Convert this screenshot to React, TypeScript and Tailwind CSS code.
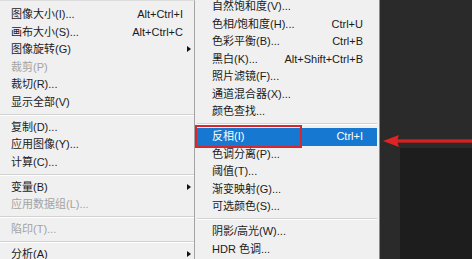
import React from "react";

type Item =
  | { sep: true }
  | { label: string; shortcut?: string; sub?: boolean; disabled?: boolean; active?: boolean };

const leftItems: Item[] = [
  { label: "图像大小(I)...", shortcut: "Alt+Ctrl+I" },
  { label: "画布大小(S)...", shortcut: "Alt+Ctrl+C" },
  { label: "图像旋转(G)", sub: true },
  { label: "裁剪(P)", disabled: true },
  { label: "裁切(R)..." },
  { label: "显示全部(V)" },
  { sep: true },
  { label: "复制(D)..." },
  { label: "应用图像(Y)..." },
  { label: "计算(C)..." },
  { sep: true },
  { label: "变量(B)", sub: true },
  { label: "应用数据组(L)...", disabled: true },
  { sep: true },
  { label: "陷印(T)...", disabled: true },
  { sep: true },
  { label: "分析(A)", sub: true },
];

const rightItems: Item[] = [
  { label: "自然饱和度(V)..." },
  { label: "色相/饱和度(H)...", shortcut: "Ctrl+U" },
  { label: "色彩平衡(B)...", shortcut: "Ctrl+B" },
  { label: "黑白(K)...", shortcut: "Alt+Shift+Ctrl+B" },
  { label: "照片滤镜(F)..." },
  { label: "通道混合器(X)..." },
  { label: "颜色查找..." },
  { sep: true },
  { label: "反相(I)", shortcut: "Ctrl+I", active: true },
  { label: "色调分离(P)..." },
  { label: "阈值(T)..." },
  { label: "渐变映射(G)..." },
  { label: "可选颜色(S)..." },
  { sep: true },
  { label: "阴影/高光(W)..." },
  { label: "HDR 色调..." },
];

function Separator() {
  return (
    <div className="h-[7.5px] flex items-center">
      <div className="w-full h-[2px] border-t border-[#d2d2d2] border-b-white border-b" />
    </div>
  );
}

function LeftMenu() {
  return (
    <div className="w-[195px] h-full bg-[#f0f0f0] border-r border-[#a4a4a4] pt-[5px] border-t border-t-[#dcdcdc]">
      {leftItems.map((it, i) =>
        "sep" in it ? (
          <Separator key={i} />
        ) : (
          <div
            key={i}
            className={`relative h-[17.5px] flex items-center pl-[11px] pr-[11px] ${
              it.disabled ? "text-[#a3a3a3]" : "text-[#1b1b1b]"
            }`}
          >
            <span className="flex-1 whitespace-nowrap">{it.label}</span>
            {it.shortcut && <span className="whitespace-nowrap">{it.shortcut}</span>}
            {it.sub && (
              <span className="absolute right-[3px] top-[5px] w-0 h-0 border-y-[3.5px] border-y-transparent border-l-[4px] border-l-[#111]" />
            )}
          </div>
        )
      )}
    </div>
  );
}

function RightMenu() {
  return (
    <div className="w-[185px] h-full bg-[#f0f0f0] border-r border-[#8a8a8a] px-[2px]">
      <div className="-mt-[2px]">
        {rightItems.map((it, i) =>
          "sep" in it ? (
            <Separator key={i} />
          ) : (
            <div
              key={i}
              className={`relative h-[17.5px] flex items-center pl-[15px] pr-[14px] ${
                it.active ? "bg-[#1778d2] text-white" : "text-[#1b1b1b]"
              }`}
            >
              <span className="flex-1 whitespace-nowrap">{it.label}</span>
              {it.shortcut && <span className="whitespace-nowrap">{it.shortcut}</span>}
              {it.active && (
                <span className="absolute -left-[2px] -top-[3px] w-[107px] h-[23px] border-2 border-[#d8272c]" />
              )}
            </div>
          )
        )}
      </div>
    </div>
  );
}

export default function App() {
  return (
    <div
      className="relative w-[472px] h-[259px] overflow-hidden flex text-[11px] leading-none bg-[#272727]"
      style={{ fontFamily: '"Liberation Sans", "Noto Sans CJK SC", sans-serif' }}
    >
      <LeftMenu />
      <RightMenu />
      <div className="flex-1 h-full flex flex-col bg-[#2a2a2a]">
        <div className="h-[148px]" />
        <div className="flex-1 ml-[20px] bg-[#1d1d1d]" />
      </div>

      {/* red arrow */}
      <svg className="absolute left-[382px] top-[132px]" width="90" height="18" viewBox="0 0 90 18">
        <rect x="10" y="7" width="80" height="4" fill="#c81e1e" opacity="0.35" />
        <rect x="10" y="7.5" width="80" height="3" fill="#d42222" />
        <polygon points="1,9 17,3 15,9 17,15" fill="#e02424" />
      </svg>
    </div>
  );
}
